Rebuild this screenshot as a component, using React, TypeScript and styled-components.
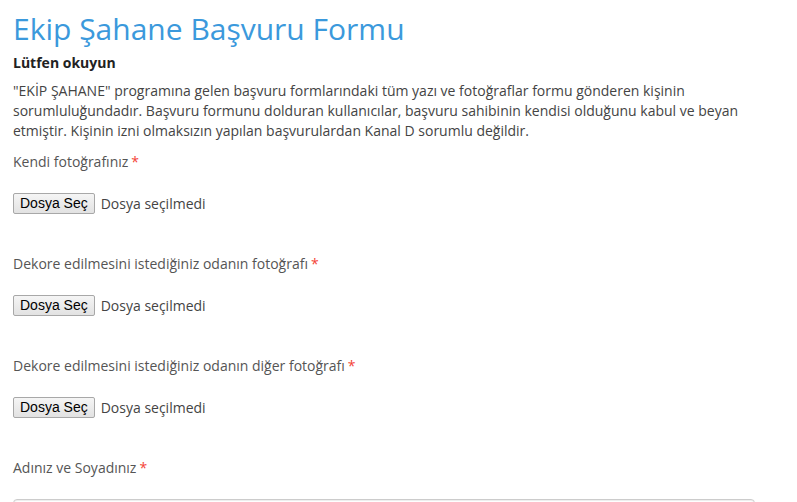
import React from "react";
import styled, { createGlobalStyle } from "styled-components";

const Global = createGlobalStyle`
  html, body { margin: 0; padding: 0; background: #fff; }
  body { font-family: "Open Sans", "Noto Sans", sans-serif; color: #333; }
`;

const Page = styled.div`
  padding: 9px 42px 0 13px;
  box-sizing: border-box;
  width: 797px;
  height: 502px;
  overflow: hidden;
`;

const Title = styled.h1`
  margin: 0;
  font-size: 30px;
  font-weight: 400;
  line-height: 40px;
  color: #3b99dc;
`;

const Sub = styled.h4`
  margin: 4px 0 0;
  font-size: 14px;
  font-weight: 700;
  line-height: 20px;
  color: #222;
`;

const Para = styled.p`
  margin: 8px 0 0;
  font-size: 14px;
  line-height: 20px;
  color: #444;
`;

const Field = styled.div`
  display: flex;
  flex-direction: column;
  margin-top: ${(p: { $first?: boolean }) => (p.$first ? "11px" : "41px")};
`;

const Label = styled.label`
  font-size: 14px;
  line-height: 20px;
  color: #555;
`;

const Req = styled.span`
  color: #f44336;
  margin-left: 3px;
`;

const FileRow = styled.div`
  display: flex;
  align-items: center;
  gap: 6px;
  margin-top: 21px;
  height: 20px;
`;

const FileButton = styled.button`
  font-family: Arial, "Liberation Sans", sans-serif;
  font-size: 14px;
  color: #000;
  height: 21px;
  padding: 0 6px;
  border: 1px solid #a8a8a8;
  border-radius: 2px;
  background: linear-gradient(#f5f5f5, #e2e2e2);
  line-height: 19px;
`;

const FileText = styled.span`
  font-size: 14px;
  color: #444;
`;

const TextInput = styled.input`
  margin-top: 21px;
  height: 34px;
  width: 742px;
  box-sizing: border-box;
  border: 1px solid #ccc;
  border-radius: 4px;
  box-shadow: inset 0 1px 1px rgba(0,0,0,0.075);
`;

const files = [
  "Kendi fotoğrafınız",
  "Dekore edilmesini istediğiniz odanın fotoğrafı",
  "Dekore edilmesini istediğiniz odanın diğer fotoğrafı",
];

export default function App() {
  return (
    <>
      <Global />
      <Page>
        <Title>Ekip Şahane Başvuru Formu</Title>
        <Sub>Lütfen okuyun</Sub>
        <Para>
          "EKİP ŞAHANE" programına gelen başvuru formlarındaki tüm yazı ve fotoğraflar formu gönderen kişinin
          sorumluluğundadır. Başvuru formunu dolduran kullanıcılar, başvuru sahibinin kendisi olduğunu kabul ve beyan
          etmiştir. Kişinin izni olmaksızın yapılan başvurulardan Kanal D sorumlu değildir.
        </Para>
        {files.map((f, i) => (
          <Field key={f} $first={i === 0}>
            <Label>
              {f}
              <Req>*</Req>
            </Label>
            <FileRow>
              <FileButton>Dosya Seç</FileButton>
              <FileText>Dosya seçilmedi</FileText>
            </FileRow>
          </Field>
        ))}
        <Field>
          <Label>
            Adınız ve Soyadınız
            <Req>*</Req>
          </Label>
          <TextInput />
        </Field>
      </Page>
    </>
  );
}
